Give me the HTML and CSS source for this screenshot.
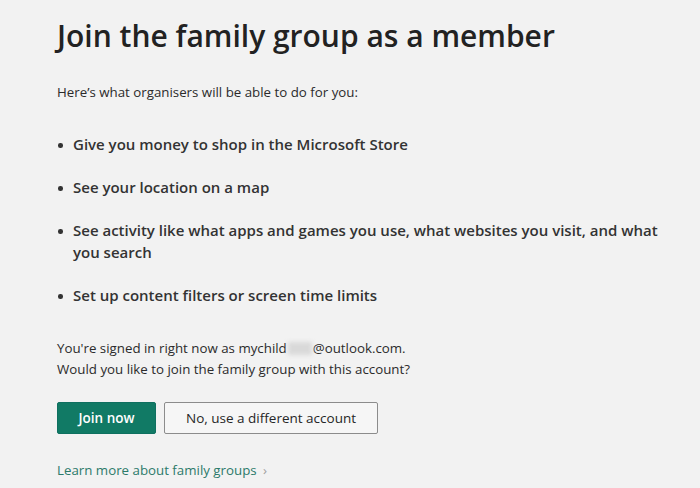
FILE: index.html
```html
<!DOCTYPE html>
<html lang="en">
<head>
<meta charset="utf-8">
<title>Join the family group</title>
<link rel="stylesheet" href="styles.css">
</head>
<body>
<main class="page">
  <h1 class="title">Join the family group as a member</h1>
  <p class="intro">Here’s what organisers will be able to do for you:</p>
  <ul class="perks">
    <li>Give you money to shop in the Microsoft Store</li>
    <li>See your location on a map</li>
    <li>See activity like what apps and games you use, what websites you visit, and what you search</li>
    <li>Set up content filters or screen time limits</li>
  </ul>
  <p class="account">You're signed in right now as mychild<span class="redact" aria-hidden="true"></span>@outlook.com.<br>Would you like to join the family group with this account?</p>
  <div class="actions">
    <button class="btn btn-primary" type="button">Join now</button>
    <button class="btn btn-secondary" type="button">No, use a different account</button>
  </div>
  <a class="learn" href="#">Learn more about family groups <span class="chev">›</span></a>
</main>
</body>
</html>
```

FILE: styles.css
```css
html, body {
  margin: 0;
  padding: 0;
  background: #f2f2f2;
}
body {
  font-family: "Open Sans", "Noto Sans", "Liberation Sans", sans-serif;
  color: #262626;
}
.page {
  padding: 16px 0 0 57px;
  width: 610px;
}
.title {
  margin: 0;
  font-size: 30px;
  font-weight: 600;
  line-height: 40px;
  color: #222;
}
.intro {
  margin: 26px 0 0;
  font-size: 13.3px;
  line-height: 20px;
  color: #2b2b2b;
}
.perks {
  margin: 31px 0 0;
  padding: 0 0 0 16px;
  font-size: 15px;
  font-weight: 600;
  line-height: 22px;
  color: #333;
  list-style: none;
}
.perks li {
  position: relative;
  margin-bottom: 21px;
}
.perks li::before {
  content: "";
  position: absolute;
  left: -15px;
  top: 10px;
  width: 4.5px;
  height: 4.5px;
  border-radius: 50%;
  background: #333;
}
.account {
  margin: 32px 0 0;
  font-size: 13.3px;
  line-height: 21px;
  color: #2b2b2b;
}
.redact {
  display: inline-block;
  width: 24px;
  height: 13px;
  margin: 0 1px;
  vertical-align: -2px;
  background: #d9d9d9;
  filter: blur(2px);
}
.actions {
  display: flex;
  gap: 8px;
  margin-top: 22px;
}
.btn {
  font-family: inherit;
  font-size: 13.5px;
  height: 32px;
  padding: 0;
  border-radius: 2px;
  cursor: pointer;
}
.btn-primary {
  width: 99px;
  background: #117a65;
  border: 1px solid #0f7060;
  color: #fff;
  font-weight: 600;
}
.btn-secondary {
  width: 214px;
  background: #f6f6f6;
  border: 1px solid #8c8c8c;
  color: #262626;
  font-weight: 500;
}
.learn {
  display: inline-block;
  margin-top: 27px;
  font-size: 13.3px;
  line-height: 18px;
  color: #2c7a6a;
  text-decoration: none;
}
.chev {
  color: #a0a0a0;
  margin-left: 3px;
}
```
